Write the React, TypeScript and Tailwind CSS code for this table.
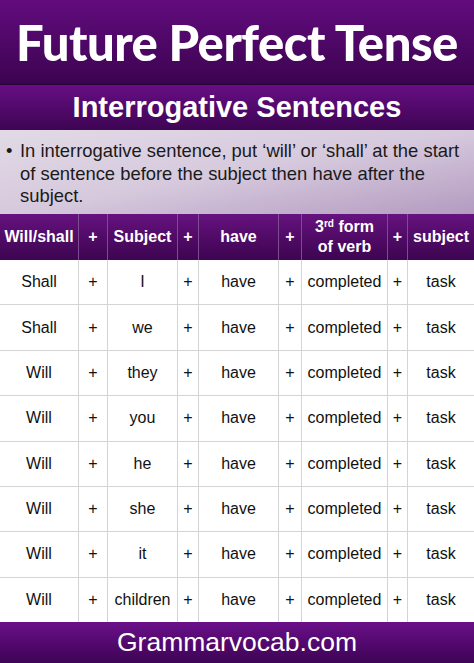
const cols = 'grid grid-cols-[79px_29px_70px_21px_80px_23px_86px_20px_66px]';

const rows = [
  ['Shall', 'I'],
  ['Shall', 'we'],
  ['Will', 'they'],
  ['Will', 'you'],
  ['Will', 'he'],
  ['Will', 'she'],
  ['Will', 'it'],
  ['Will', 'children'],
];

function HeadCell({ children, last }: { children: React.ReactNode; last?: boolean }) {
  return (
    <div
      className={`flex items-center justify-center text-center leading-[20px] ${last ? '' : 'border-r border-[#7d4a93]'}`}
    >
      {children}
    </div>
  );
}

function Cell({ children, last }: { children: React.ReactNode; last?: boolean }) {
  return (
    <div className={`flex items-center justify-center ${last ? '' : 'border-r border-[#d4d4d4]'}`}>
      {children}
    </div>
  );
}

export default function App() {
  return (
    <div className="w-[474px] h-[663px] flex flex-col bg-white font-['Liberation_Sans',Arial,sans-serif] overflow-hidden">
      <header className="h-[84px] flex items-center justify-center bg-gradient-to-b from-[#620c7e] to-[#3c0450]">
        <h1 className="text-white font-['Lato',sans-serif] font-black text-[49px] tracking-[-0.5px] leading-none">
          Future Perfect Tense
        </h1>
      </header>

      <div className="h-[46px] flex items-center justify-center bg-gradient-to-b from-[#660f84] to-[#3e0553] border-t border-[#2a0338]">
        <h2 className="text-white font-bold text-[29px] leading-none">Interrogative Sentences</h2>
      </div>

      <section className="h-[84px] pl-[6px] pr-[9px] pt-[10px] bg-gradient-to-br from-[#e2dae6] via-[#d6c9dd] to-[#b39bc0] text-[#1a1a1a] text-[18.4px] leading-[22.5px]">
        <div className="flex">
          <span className="w-[14px] shrink-0">•</span>
          <p className="text-left">
            In interrogative sentence, put ‘will’ or ‘shall’ at the start of sentence before the subject then have after the subject.
          </p>
        </div>
      </section>

      <div className={`${cols} h-[46px] bg-gradient-to-b from-[#66127f] to-[#3d0550] text-white font-bold text-[16px]`}>
        <HeadCell>Will/shall</HeadCell>
        <HeadCell>+</HeadCell>
        <HeadCell>Subject</HeadCell>
        <HeadCell>+</HeadCell>
        <HeadCell>have</HeadCell>
        <HeadCell>+</HeadCell>
        <HeadCell>
          <span>
            3<sup className="text-[10px]">rd</sup> form
            <br />
            of verb
          </span>
        </HeadCell>
        <HeadCell>+</HeadCell>
        <HeadCell last>subject</HeadCell>
      </div>

      <div className="flex-1 flex flex-col text-[16px] text-[#111]">
        {rows.map(([aux, subj], i) => (
          <div
            key={i}
            className={`${cols} flex-1 ${i < rows.length - 1 ? 'border-b border-[#d4d4d4]' : ''}`}
          >
            <Cell>{aux}</Cell>
            <Cell>+</Cell>
            <Cell>{subj}</Cell>
            <Cell>+</Cell>
            <Cell>have</Cell>
            <Cell>+</Cell>
            <Cell>completed</Cell>
            <Cell>+</Cell>
            <Cell last>task</Cell>
          </div>
        ))}
      </div>

      <footer className="h-[41px] flex items-center justify-center bg-gradient-to-b from-[#6a108a] to-[#3e0455]">
        <span className="text-white text-[26.5px] leading-none">Grammarvocab.com</span>
      </footer>
    </div>
  );
}
